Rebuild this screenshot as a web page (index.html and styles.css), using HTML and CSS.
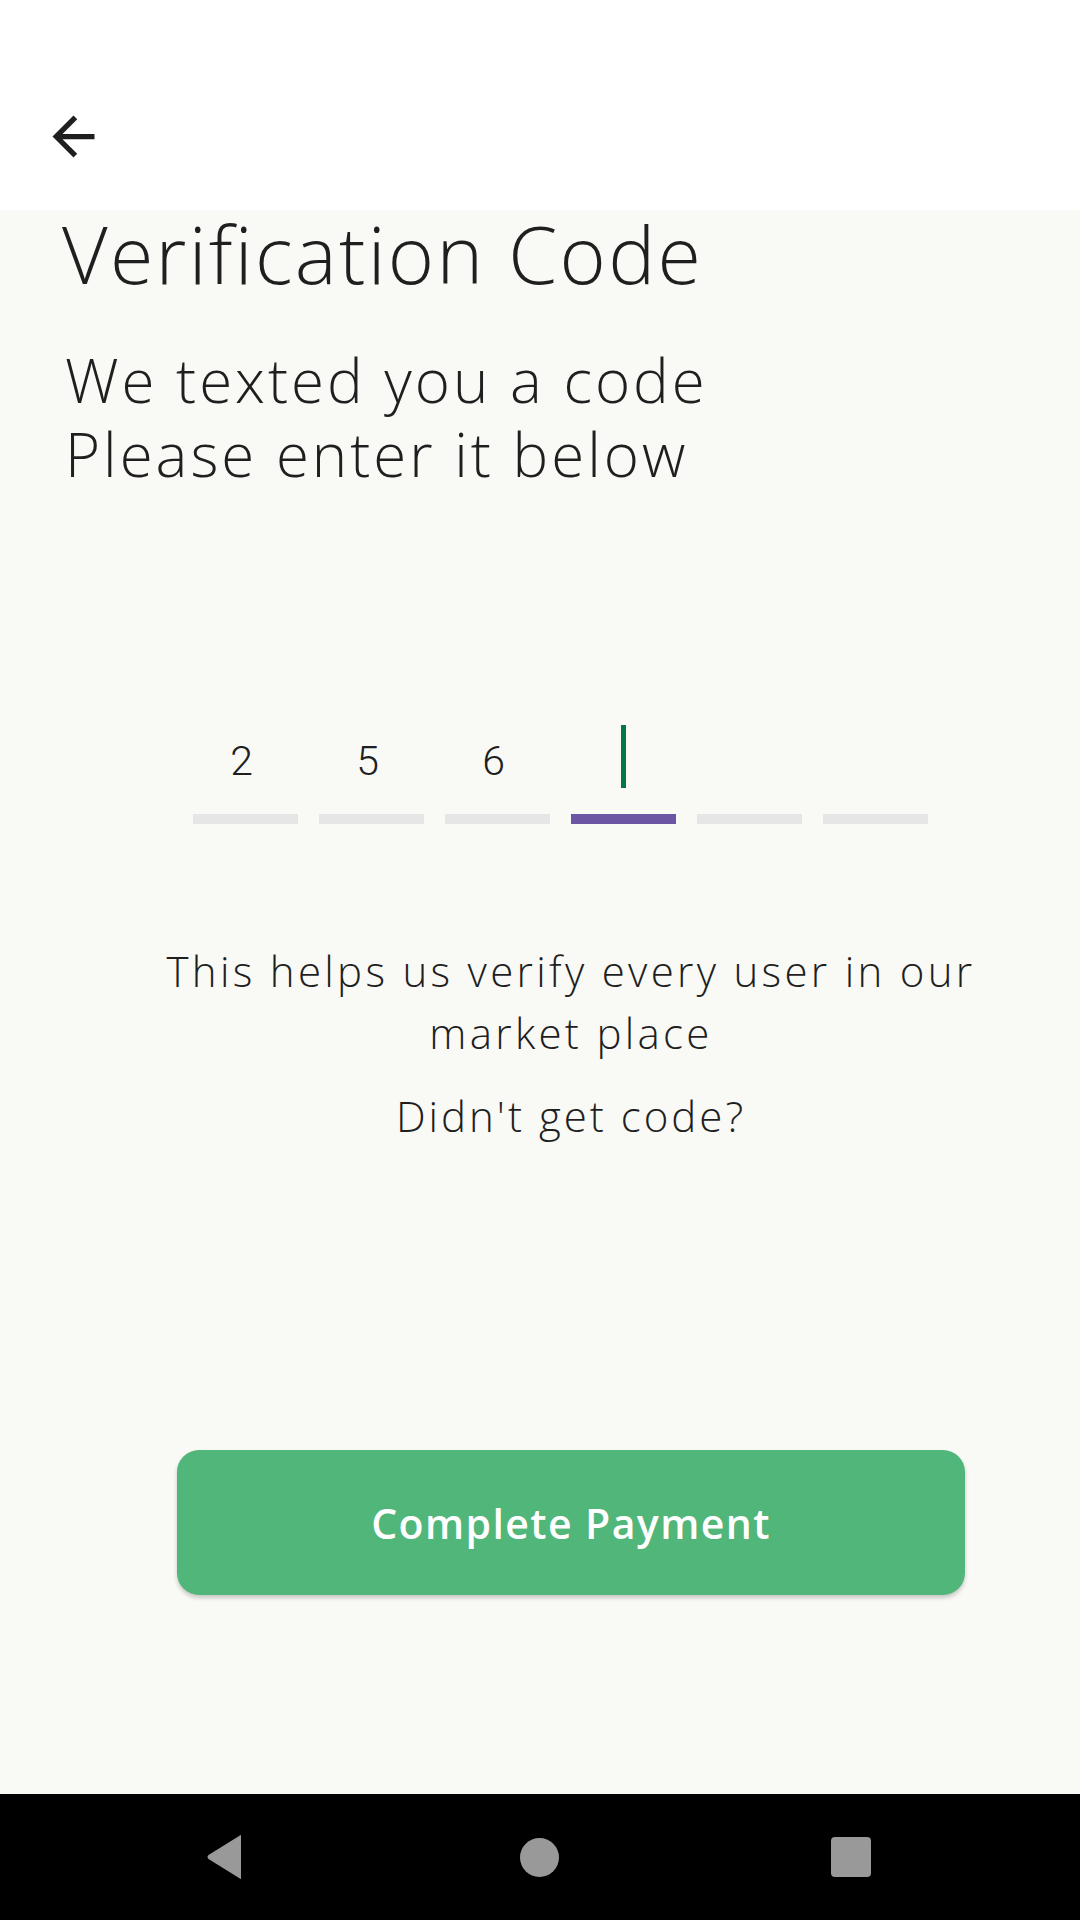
FILE: index.html
```html
<!DOCTYPE html>
<html>
<head>
<meta charset="utf-8">
<link rel="stylesheet" href="styles.css">
</head>
<body>
<div class="screen">
  <header class="appbar">
    <svg class="back" viewBox="0 0 24 24" width="63" height="63"><path d="M20 11H7.83l5.59-5.59L12 4l-8 8 8 8 1.41-1.41L7.83 13H20v-2z" fill="#1f1f1f"/></svg>
  </header>
  <main class="content">
    <h1 class="title">Verification Code</h1>
    <p class="subtitle"><span class="line">We texted you a code</span><span class="line">Please enter it below</span></p>
    <div class="code-row">
      <div class="slot"><span class="digit">2</span><span class="bar"></span></div>
      <div class="slot"><span class="digit">5</span><span class="bar"></span></div>
      <div class="slot"><span class="digit">6</span><span class="bar"></span></div>
      <div class="slot active"><span class="digit"><span class="cursor"></span></span><span class="bar"></span></div>
      <div class="slot"><span class="digit"></span><span class="bar"></span></div>
      <div class="slot"><span class="digit"></span><span class="bar"></span></div>
    </div>
    <p class="info">This helps us verify every user in our market place</p>
    <p class="resend">Didn't get code?</p>
    <button class="pay">Complete Payment</button>
  </main>
  <nav class="sysnav">
    <svg class="nav-back" width="40" height="46" viewBox="0 0 40 46"><path d="M36 2 L36 44 Q36 46 34.5 44.2 L3.5 25 Q1.5 23 3.5 21 L34.5 1.8 Q36 0 36 2 Z" fill="#999"/></svg>
    <span class="home"></span>
    <span class="recent"></span>
  </nav>
</div>
</body>
</html>
```

FILE: styles.css
```css
* { box-sizing: border-box; }
html, body { margin: 0; padding: 0; }
body { width: 1080px; height: 1920px; background: #f9faf6; font-family: "Open Sans", "Lato", sans-serif; color: #1f1f1f; }
.screen { width: 1080px; height: 1920px; display: flex; flex-direction: column; }
.appbar { height: 210px; background: #ffffff; padding: 105px 0 0 42px; }
.back { display: block; }
.content { flex: 1; display: flex; flex-direction: column; }
.title { margin: 0; padding-left: 62px; font-size: 79px; font-weight: 300; line-height: 88px; letter-spacing: 2.3px; }
.subtitle { margin: 46px 0 0; padding-left: 65px; font-size: 60px; font-weight: 300; line-height: 73px; letter-spacing: 3px; display: flex; flex-direction: column; }
.line { display: block; height: 73px; }
.line + .line { padding-top: 1px; }
.code-row { margin: 235px 0 0 193px; display: flex; gap: 21px; }
.slot { width: 105px; display: flex; flex-direction: column; align-items: center; }
.digit { height: 63px; width: 100%; display: flex; justify-content: center; align-items: flex-end; font-family: "Roboto", sans-serif; font-size: 41px; font-weight: 300; line-height: 1; padding: 0 8px 6px 0; color: #1f1f1f; }
.cursor { display: block; width: 5px; height: 63px; background: #007a45; margin: 0 -8px -6px 0; }
.bar { display: block; width: 105px; height: 10px; margin-top: 26px; background: #e6e6e6; }
.active .bar { background: #6c55a3; }
.info { margin: 116px 60px 0 122px; text-align: center; font-size: 42px; font-weight: 300; line-height: 62px; letter-spacing: 3.3px; }
.resend { margin: 21px 60px 0 122px; text-align: center; font-size: 42px; font-weight: 300; line-height: 62px; letter-spacing: 3px; }
.pay { margin: 303px 0 0 177px; width: 788px; height: 145px; border: none; border-radius: 22px; background: #50b67a; color: #ffffff; font-family: "Open Sans", sans-serif; font-size: 41px; font-weight: 600; letter-spacing: 1.4px; box-shadow: 0 3px 4px rgba(0,0,0,0.2); }
.sysnav { height: 126px; background: #000; display: flex; align-items: center; padding-left: 205px; }
.nav-back { display: block; }
.home { width: 39px; height: 39px; border-radius: 50%; background: #999; margin-left: 275px; }
.recent { width: 40px; height: 40px; border-radius: 4px; background: #999; margin-left: 272px; }
```
